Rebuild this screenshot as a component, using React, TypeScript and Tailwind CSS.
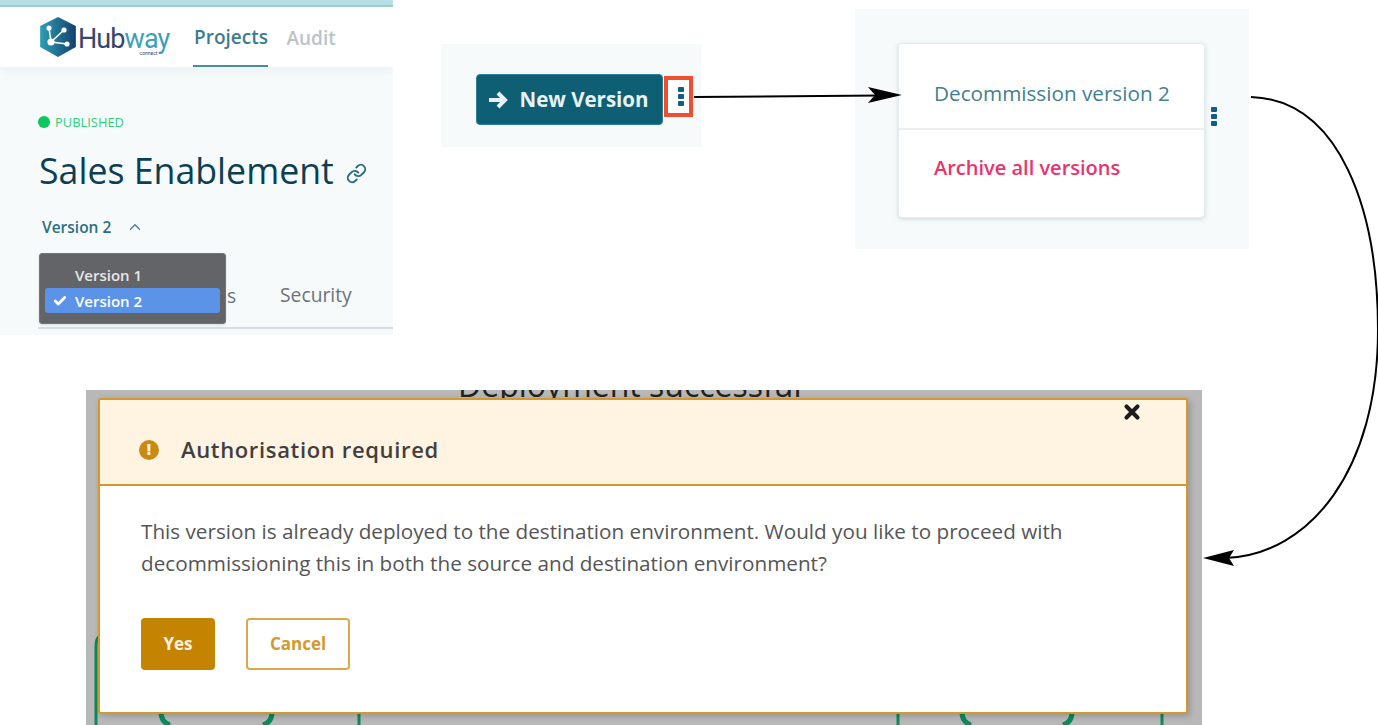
import { Check, ChevronUp, Link as LinkIcon, X } from 'lucide-react';

const openSans = "font-['Open_Sans',sans-serif]";

const Kebab = ({ className }: { className: string }) => (
  <div className={`flex flex-col gap-[2px] ${className}`}>
    <span className="h-[5px] w-[6px] rounded-[1px] bg-[#0f5f80]" />
    <span className="h-[5px] w-[6px] rounded-[1px] bg-[#0f5f80]" />
    <span className="h-[5px] w-[6px] rounded-[1px] bg-[#0f5f80]" />
  </div>
);

const Logo = () => (
  <svg width="40" height="40" viewBox="0 0 40 40">
    <defs>
      <linearGradient id="hex" x1="0" y1="0" x2="1" y2="0">
        <stop offset="0" stopColor="#2f9db5" />
        <stop offset="1" stopColor="#14406e" />
      </linearGradient>
    </defs>
    <path d="M20 0 L37 9 V30 L20 40 L3 30 V9 Z" fill="url(#hex)" transform="translate(-1 0) scale(1.05 1)" />
    <g stroke="#fff" strokeWidth="1.6">
      <path d="M13 25 L11 11 M13 25 L26 13 M13 25 L29 27" />
    </g>
    <circle cx="13" cy="25" r="3.6" fill="#fff" />
    <circle cx="11" cy="11" r="2.6" fill="#fff" />
    <circle cx="26" cy="13" r="2.6" fill="#fff" />
    <circle cx="29" cy="27" r="2.6" fill="#fff" />
  </svg>
);

const ProjectPanel = () => (
  <div className={`absolute left-0 top-0 h-[335px] w-[393px] overflow-hidden bg-[#f6fafb] ${openSans}`}>
    <div className="h-[7px] border-b-2 border-[#a3ccd2] bg-[#b6e0e4]" />
    <div className="flex h-[60px] items-stretch bg-white pl-[38px] shadow-[0_4px_8px_rgba(200,220,225,0.25)]">
      <div className="mt-[10px] flex items-start">
        <Logo />
        <div className="mt-[10px] flex flex-col items-end font-['Roboto',sans-serif]">
          <div className="text-[27px] leading-[24px] tracking-[-0.9px]">
            <span className="text-[#34466f]">Hub</span>
            <span className="text-[#3f9fb8]">way</span>
          </div>
          <span className="pr-[12px] text-[5px] leading-[5px] text-[#34466f]">connect</span>
        </div>
      </div>
      <div className="ml-[24px] flex h-[60px] w-[75px] items-center justify-center border-b-2 border-[#4a8b9c] pt-[2px] text-[19px] font-semibold text-[#3d7c8e]">
        Projects
      </div>
      <div className="ml-[18px] flex h-[60px] items-center pt-[2px] text-[19px] font-semibold text-[#b9c3c8]">Audit</div>
    </div>
    <div className="relative pl-[38px] pt-[46px]">
      <div className="flex items-center gap-[5px]">
        <span className="h-[12px] w-[12px] rounded-full bg-[#0cc65f]" />
        <span className="text-[12.9px] leading-[18px] text-[#2fcf7a]">PUBLISHED</span>
      </div>
      <div className="mt-[17px] flex items-center gap-[12px] pl-[1px]">
        <h1 className="text-[35.7px] font-medium leading-[44px] text-[#0c3f52]">Sales Enablement</h1>
        <LinkIcon className="mt-[6px] h-[21px] w-[21px] text-[#2b6c80]" strokeWidth={2.2} />
      </div>
      <div className="mt-[25px] flex items-center pl-[4px] text-[15.5px] font-semibold leading-[20px] text-[#2f6e80]">
        Version 2
        <ChevronUp className="ml-[15px] h-[18px] w-[18px] text-[#4a7f8f]" strokeWidth={1.8} />
      </div>
      <div className="mt-[46px] flex pl-[242px] text-[19.3px] leading-[24px] text-[#6b7478]">Security</div>
      <div className="mt-[20px] h-[2px] bg-[#d5dde2]" />
      <span className="absolute left-[227px] top-[217px] text-[19.3px] leading-[24px] text-[#6b7478]">s</span>
      <div className="absolute left-[39px] top-[186px] h-[71px] w-[187px] rounded-[3px] border border-[#74757a] bg-[#636468] px-[5px] pt-[11px] text-[15px] font-semibold leading-[20px] shadow-sm">
        <div className="pl-[30px] text-[#e6e6e6]">Version 1</div>
        <div className="mt-[3px] flex h-[25px] items-center rounded-[3px] bg-[#5b93e8] pl-[8px] text-white">
          <Check className="mr-[8px] h-[14px] w-[14px]" strokeWidth={5} />
          Version 2
        </div>
      </div>
    </div>
  </div>
);

const NewVersionPanel = () => (
  <div className={`absolute left-[441px] top-[44px] flex h-[103px] w-[260px] items-start bg-[#f6fafb] pl-[35px] pt-[30px] ${openSans}`}>
    <button className="flex h-[51px] w-[187px] items-center justify-center gap-[10px] rounded-[4px] border border-[#2a8198] bg-[#0f5f74] pr-[1px] text-[20.5px] font-bold text-[#e8f2f4]">
      <svg width="20" height="18" viewBox="0 0 20 18" fill="none" stroke="currentColor" strokeWidth="4">
        <path d="M0 9 H16 M9 2 L16 9 L9 16" />
      </svg>
      New Version
    </button>
    <div className="ml-[1px] mt-[2px] flex h-[41px] w-[29px] items-center justify-center border-4 border-[#f04e30] bg-white pl-[4px]">
      <Kebab className="" />
    </div>
  </div>
);

const MenuPanel = () => (
  <div className={`absolute left-[855px] top-[9px] h-[240px] w-[394px] bg-[#f6fafb] pl-[43px] pt-[34px] ${openSans}`}>
    <div className="flex h-[175px] w-[307px] flex-col rounded-[4px] border border-[#e6ebee] bg-white shadow-[0_1px_4px_rgba(120,140,150,0.3)]">
      <div className="flex h-[86px] items-center border-b-2 border-[#eceff2] pl-[35px] pt-[15px] text-[20.7px] text-[#44808f]">
        Decommission version 2
      </div>
      <div className="flex flex-1 items-center pb-[12px] pl-[35px] text-[20px] font-semibold text-[#e8336d]">
        Archive all versions
      </div>
    </div>
    <Kebab className="absolute left-[356px] top-[98px]" />
  </div>
);

const ModalPanel = () => (
  <div className={`absolute left-[86px] top-[390px] h-[335px] w-[1116px] overflow-hidden bg-[#b8b8b8] ${openSans}`}>
    <div className="absolute left-[372px] top-[-27px] whitespace-nowrap text-[32px] leading-[44px] text-[#222]">
      Deployment successful
    </div>
    <svg className="absolute inset-0" width="1116" height="335" fill="none" stroke="#0b8a5a" strokeWidth="3">
      <path d="M10 335 V256 Q10 248 14 246" />
      <path d="M75 322 Q75 332 84 335" strokeWidth="5" />
      <path d="M186 322 Q186 332 177 335" strokeWidth="5" />
      <path d="M273 322 V335" />
      <path d="M812 322 V335" />
      <path d="M876 322 Q876 332 885 335" strokeWidth="5" />
      <path d="M986 322 Q986 332 977 335" strokeWidth="5" />
      <path d="M1076 322 V335" />
    </svg>
    <div className="relative ml-[12px] mt-[8px] h-[316px] w-[1090px] overflow-hidden rounded-[3px] border-2 border-[#d4982f] bg-white shadow-[2px_2px_6px_rgba(0,0,0,0.2)]">
      <div className="relative flex h-[86px] items-center border-b-2 border-[#d4982f] bg-[#fff4e2] pl-[39px] pt-[15px]">
        <span className="flex h-[20px] w-[20px] items-center justify-center rounded-full bg-[#c98a12] text-[15px] font-extrabold leading-none text-[#fff4e2]">
          !
        </span>
        <span className="ml-[22px] text-[22px] font-semibold tracking-[0.65px] text-[#3f3f3f]">Authorisation required</span>
        <X className="absolute left-[1021px] top-[1px] h-[22px] w-[22px] text-[#1c1c1c]" strokeWidth={4.5} />
      </div>
      <div className="pl-[41px] pt-[29px] text-[20.7px] leading-[32px] text-[#555]">
        <p>This version is already deployed to the destination environment. Would you like to proceed with</p>
        <p>decommissioning this in both the source and destination environment?</p>
      </div>
      <div className="mt-[39px] flex gap-[31px] pl-[41px] text-[17px] font-bold">
        <button className="h-[52px] w-[74px] rounded-[4px] bg-[#c48300] text-[#fff3e0]">Yes</button>
        <button className="h-[52px] w-[104px] rounded-[4px] border-2 border-[#dba94a] bg-white text-[#d4982f]">Cancel</button>
      </div>
    </div>
  </div>
);

const Connectors = () => (
  <svg className="absolute inset-0" width="1378" height="725" fill="none" stroke="#000" strokeWidth="2">
    <path d="M694 97 L880 95.4" />
    <path d="M902 95 L868 87 L875 95 L868 103 Z" fill="#000" stroke="none" />
    <path d="M1251 97 C1340 100 1378 210 1378 330 C1378 470 1310 555 1225 558" />
    <path d="M1203 558 L1234 550 L1229 558 L1234 566 Z" fill="#000" stroke="none" />
  </svg>
);

export default function App() {
  return (
    <div className="relative h-[725px] w-[1378px] overflow-hidden bg-white">
      <ProjectPanel />
      <NewVersionPanel />
      <MenuPanel />
      <ModalPanel />
      <Connectors />
    </div>
  );
}
